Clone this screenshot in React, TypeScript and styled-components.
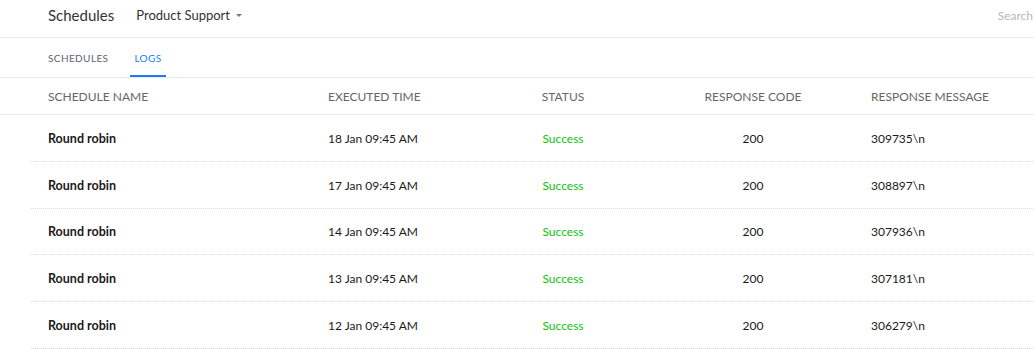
import React from "react";
import styled, { createGlobalStyle } from "styled-components";

const Global = createGlobalStyle`
  html, body { margin: 0; padding: 0; background: #fff; }
  body { font-family: Lato, "Open Sans", Arial, sans-serif; overflow: hidden; }
`;

const Page = styled.div`
  width: 1034px;
  overflow: hidden;
`;

const TopBar = styled.header`
  display: flex;
  align-items: center;
  height: 38px;
  box-sizing: border-box;
  padding: 0 1px 7px 48px;
  border-bottom: 1px solid #ebebeb;
`;

const Title = styled.h1`
  margin: 0;
  font-size: 15px;
  font-weight: 400;
  color: #333;
`;

const Picker = styled.div`
  display: flex;
  align-items: center;
  margin-left: 22px;
  font-size: 13px;
  color: #333;
  gap: 6px;
`;

const Caret = styled.span`
  width: 0;
  height: 0;
  border-left: 3px solid transparent;
  border-right: 3px solid transparent;
  border-top: 3px solid #777;
  margin-top: 1px;
`;

const Search = styled.span`
  margin-left: auto;
  font-size: 12px;
  color: #b8b8b8;
`;

const Tabs = styled.nav`
  display: flex;
  height: 40px;
  box-sizing: border-box;
  padding-left: 48px;
  gap: 18px;
  border-bottom: 1px solid #ebebeb;
`;

const Tab = styled.div<{ $active?: boolean }>`
  display: flex;
  align-items: center;
  padding: 2px 4px 0 ${(p) => (p.$active ? "4px" : "0")};
  box-sizing: border-box;
  font-size: 10px;
  letter-spacing: 0.4px;
  color: ${(p) => (p.$active ? "#1a7cf2" : "#5b6373")};
  border-bottom: 2px solid ${(p) => (p.$active ? "#1a7cf2" : "transparent")};
`;

const cols = "280px 163px 144px 236px 1fr";

const HeadRow = styled.div`
  display: grid;
  grid-template-columns: ${cols};
  align-items: center;
  height: 37px;
  box-sizing: border-box;
  padding-left: 48px;
  border-bottom: 1px solid #ebebeb;
  font-size: 12px;
  color: #666;
  text-transform: uppercase;
`;

const Rows = styled.div`
  padding-left: 31px;
`;

const Row = styled.div`
  display: grid;
  grid-template-columns: ${cols};
  align-items: center;
  height: 46.75px;
  box-sizing: border-box;
  padding-left: 17px;
  padding-top: 1px;
  border-bottom: 1px dotted #dcdcdc;
  font-size: 12px;
  color: #1a1a1a;
`;

const Cell = styled.div<{ $center?: boolean }>`
  text-align: ${(p) => (p.$center ? "center" : "left")};
  white-space: nowrap;
`;

const NameCell = styled(Cell)`
  font-weight: 700;
  font-size: 12.5px;
`;

const Status = styled(Cell)`
  color: #0cc40c;
`;

const data = [
  ["18 Jan 09:45 AM", "309735\\n"],
  ["17 Jan 09:45 AM", "308897\\n"],
  ["14 Jan 09:45 AM", "307936\\n"],
  ["13 Jan 09:45 AM", "307181\\n"],
  ["12 Jan 09:45 AM", "306279\\n"],
];

export default function App() {
  return (
    <Page>
      <Global />
      <TopBar>
        <Title>Schedules</Title>
        <Picker>
          Product Support <Caret />
        </Picker>
        <Search>Search</Search>
      </TopBar>
      <Tabs>
        <Tab>SCHEDULES</Tab>
        <Tab $active>LOGS</Tab>
      </Tabs>
      <HeadRow>
        <Cell>Schedule Name</Cell>
        <Cell>Executed Time</Cell>
        <Cell $center>Status</Cell>
        <Cell $center>Response Code</Cell>
        <Cell>Response Message</Cell>
      </HeadRow>
      <Rows>
        {data.map(([time, msg]) => (
          <Row key={time}>
            <NameCell>Round robin</NameCell>
            <Cell>{time}</Cell>
            <Status $center>Success</Status>
            <Cell $center>200</Cell>
            <Cell>{msg}</Cell>
          </Row>
        ))}
      </Rows>
    </Page>
  );
}
